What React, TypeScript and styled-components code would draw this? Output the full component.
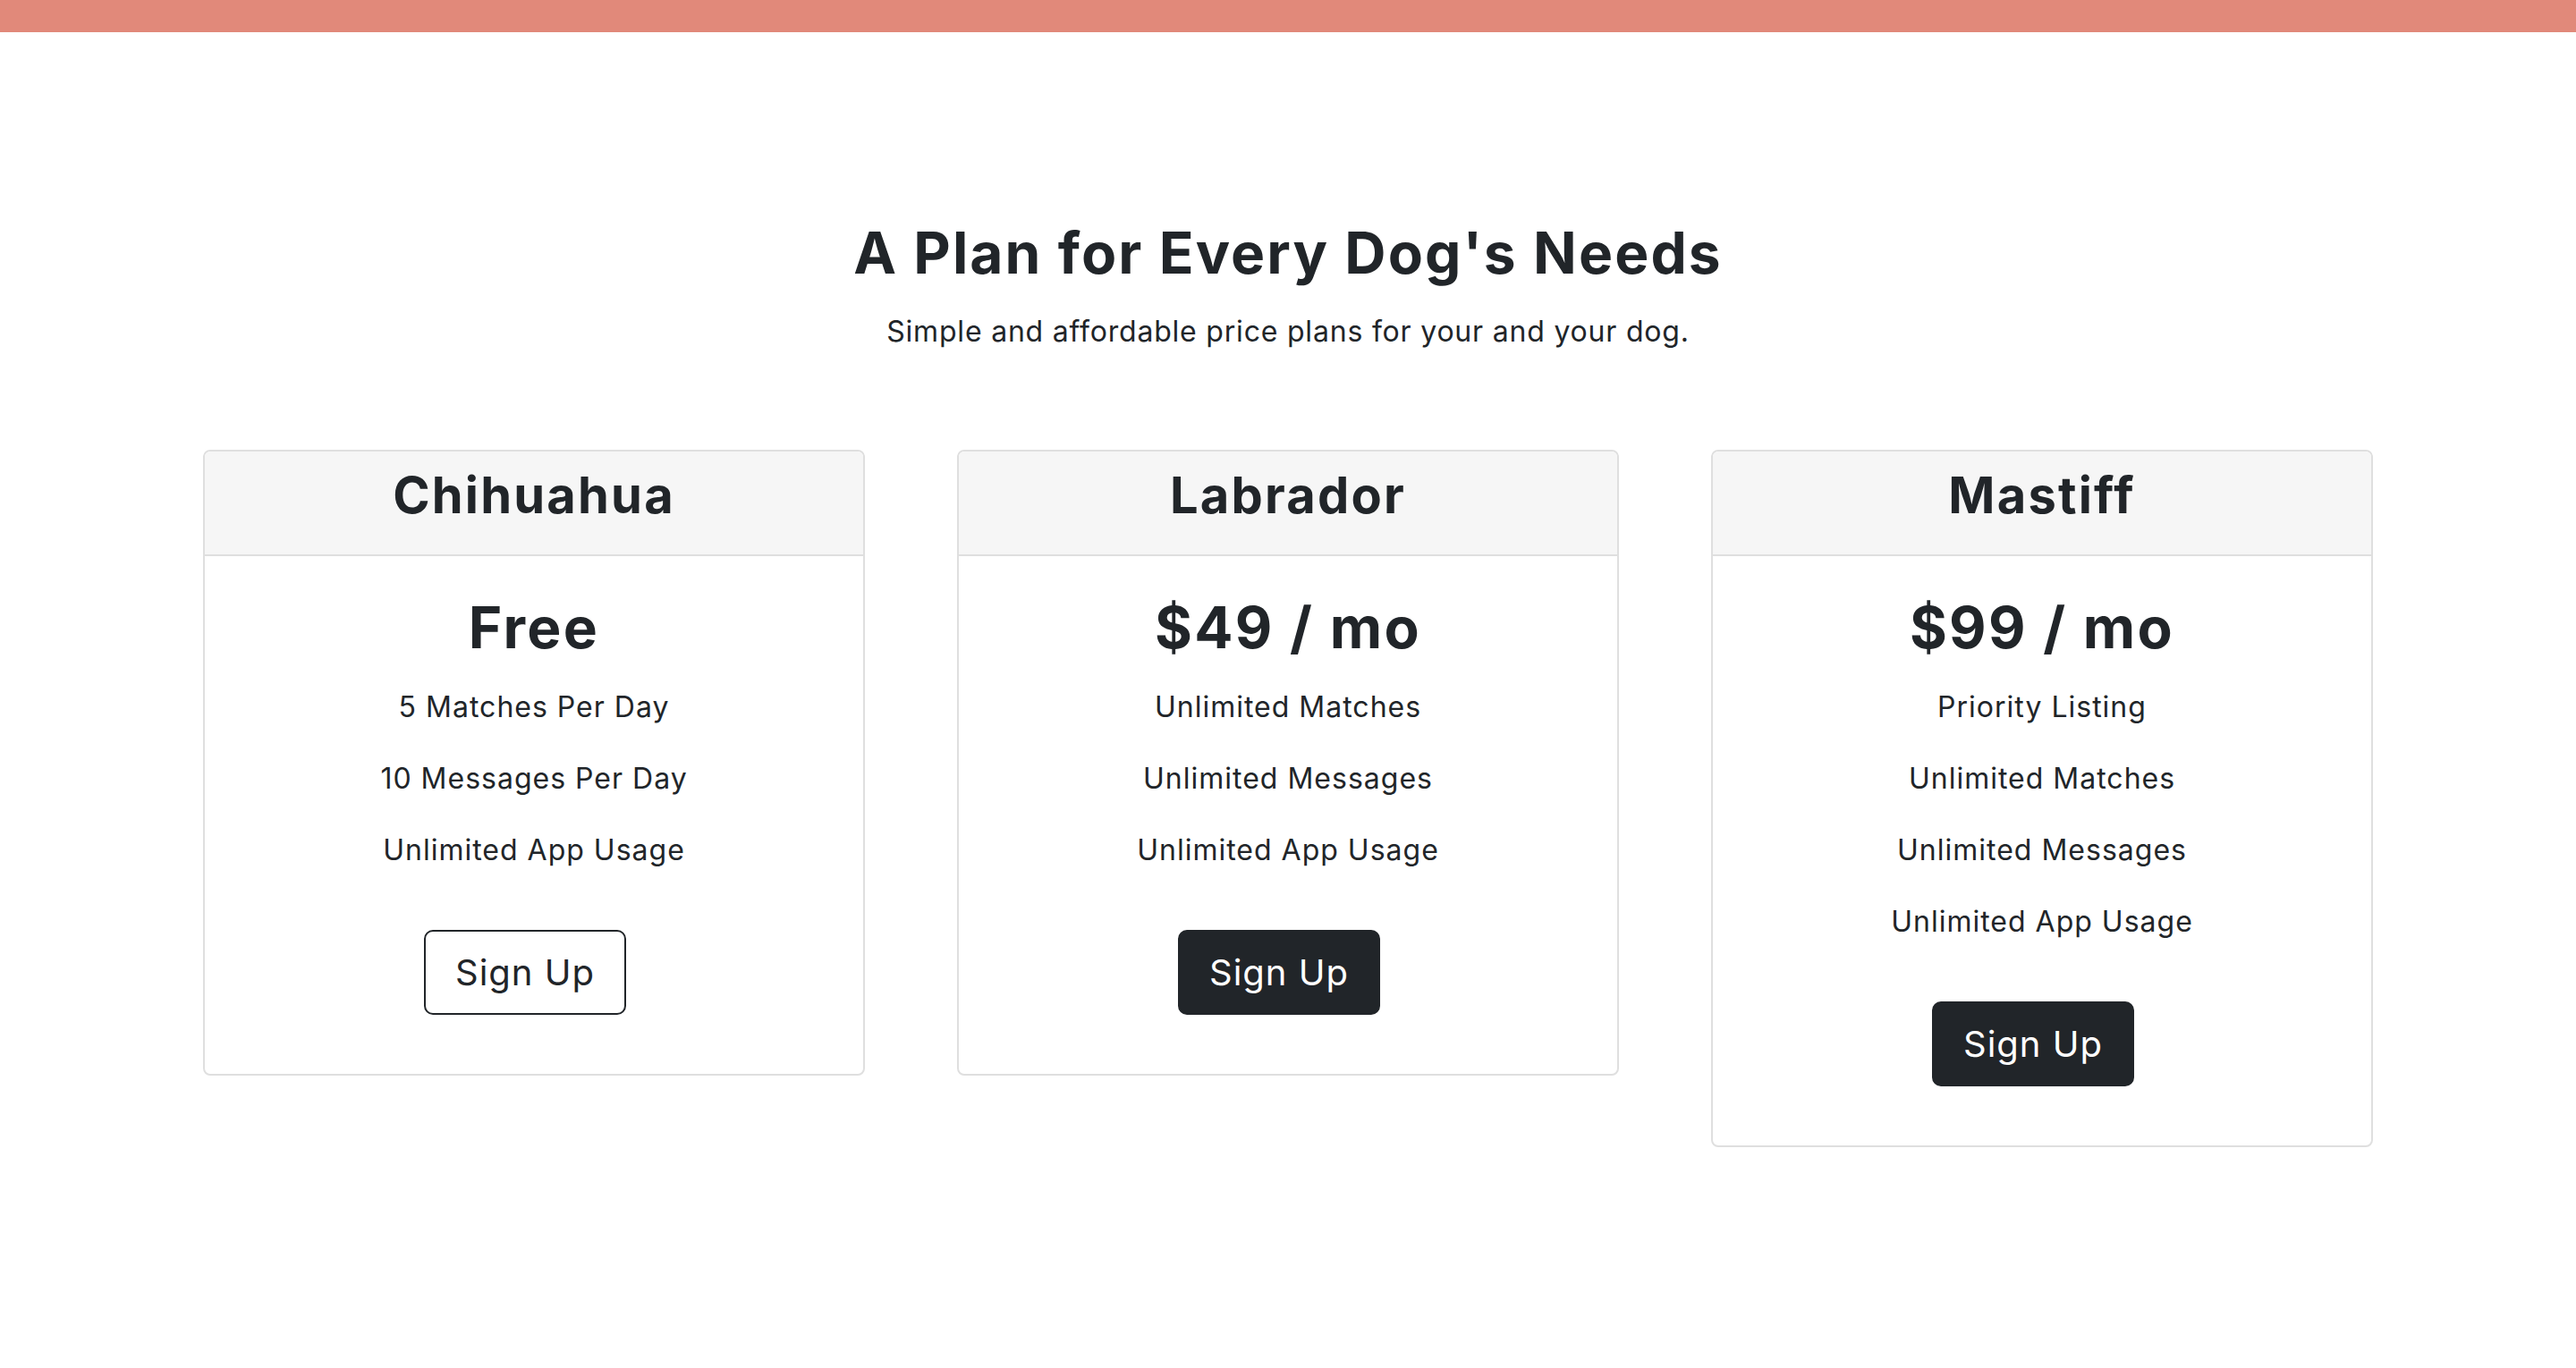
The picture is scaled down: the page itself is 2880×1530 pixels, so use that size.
import React from "react";
import styled, { createGlobalStyle } from "styled-components";

const GlobalStyle = createGlobalStyle`
  html, body {
    margin: 0;
    padding: 0;
    background: #ffffff;
  }
  body {
    font-family: Inter, "Open Sans", "Liberation Sans", sans-serif;
    color: #212529;
    -webkit-font-smoothing: antialiased;
  }
  * { box-sizing: border-box; }
`;

const TopBar = styled.div`
  height: 36px;
  background: #e1897a;
`;

const Pricing = styled.section`
  text-align: center;
  padding-top: 209px;
  padding-bottom: 120px;
`;

const Title = styled.h2`
  margin: 0;
  font-size: 64px;
  line-height: 1.2;
  font-weight: 700;
  letter-spacing: 2.1px;
`;

const Subtitle = styled.p`
  margin: 25px 0 0;
  font-size: 32px;
  line-height: 48px;
  font-weight: 400;
  letter-spacing: 0.8px;
`;

const CardRow = styled.div`
  display: grid;
  grid-template-columns: repeat(3, 740px);
  column-gap: 103px;
  justify-content: center;
  align-items: start;
  margin-top: 108px;
`;

const Card = styled.div`
  border: 2px solid #dfdfdf;
  border-radius: 8px;
  overflow: hidden;
  background: #ffffff;
`;

const CardHeader = styled.div`
  background: #f6f6f6;
  border-bottom: 2px solid #dfdfdf;
  padding: 16px 32px 32px;
`;

const PlanName = styled.h3`
  margin: 0;
  font-size: 56px;
  line-height: 1.2;
  font-weight: 700;
  letter-spacing: 2.2px;
`;

const CardBody = styled.div`
  padding: 42px 40px 40px;
`;

const Price = styled.h2`
  margin: 0 0 26px;
  font-size: 64px;
  line-height: 1.2;
  font-weight: 700;
  letter-spacing: 2.3px;
`;

const Feature = styled.p`
  margin: 0 0 32px;
  font-size: 32px;
  line-height: 48px;
  font-weight: 400;
  letter-spacing: 1px;
`;

const ButtonWrap = styled.div`
  margin-top: 65px;
  margin-bottom: 26px;
`;

const SignUpButton = styled.button<{ $dark?: boolean }>`
  display: inline-block;
  margin-right: 20px;
  font-family: inherit;
  font-size: 40px;
  line-height: 60px;
  font-weight: 400;
  letter-spacing: 1px;
  padding: 16px 33px 15px;
  border: 2px solid #212529;
  border-radius: 10px;
  background: ${(p) => (p.$dark ? "#212529" : "#ffffff")};
  color: ${(p) => (p.$dark ? "#ffffff" : "#212529")};
  cursor: pointer;
`;

type Plan = {
  name: string;
  price: string;
  features: string[];
  dark: boolean;
};

const plans: Plan[] = [
  {
    name: "Chihuahua",
    price: "Free",
    features: ["5 Matches Per Day", "10 Messages Per Day", "Unlimited App Usage"],
    dark: false,
  },
  {
    name: "Labrador",
    price: "$49 / mo",
    features: ["Unlimited Matches", "Unlimited Messages", "Unlimited App Usage"],
    dark: true,
  },
  {
    name: "Mastiff",
    price: "$99 / mo",
    features: [
      "Priority Listing",
      "Unlimited Matches",
      "Unlimited Messages",
      "Unlimited App Usage",
    ],
    dark: true,
  },
];

export default function App() {
  return (
    <>
      <GlobalStyle />
      <TopBar />
      <Pricing>
        <Title>A Plan for Every Dog's Needs</Title>
        <Subtitle>Simple and affordable price plans for your and your dog.</Subtitle>
        <CardRow>
          {plans.map((plan) => (
            <Card key={plan.name}>
              <CardHeader>
                <PlanName>{plan.name}</PlanName>
              </CardHeader>
              <CardBody>
                <Price>{plan.price}</Price>
                {plan.features.map((f) => (
                  <Feature key={f}>{f}</Feature>
                ))}
                <ButtonWrap>
                  <SignUpButton $dark={plan.dark}>Sign Up</SignUpButton>
                </ButtonWrap>
              </CardBody>
            </Card>
          ))}
        </CardRow>
      </Pricing>
    </>
  );
}
